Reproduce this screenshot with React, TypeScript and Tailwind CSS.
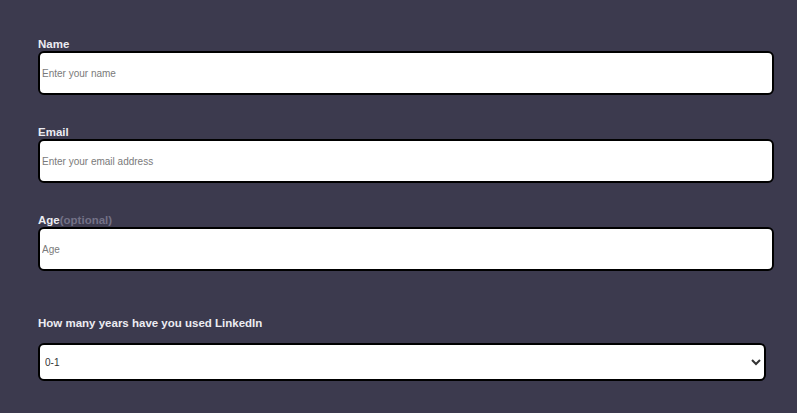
const field =
  "block h-[44px] w-[736px] rounded-[6px] border-2 border-black bg-white px-[2px] font-['Liberation_Sans',Arial,sans-serif] text-[10px] text-[#333] placeholder:text-[#7a7a7a] outline-none";

const label = "block text-[11.5px] font-bold leading-[14px] text-[#ececf2]";

export default function App() {
  return (
    <div className="min-h-[413px] w-full bg-[#3c3a4e] font-['Liberation_Sans',Arial,sans-serif]">
      <form className="pl-[38px] pr-[24px] pt-[37px]">
        {/* Name */}
        <label className={label}>Name</label>
        <input type="text" placeholder="Enter your name" className={field} />

        {/* Email */}
        <label className={`mt-[30px] ${label}`}>Email</label>
        <input type="email" placeholder="Enter your email address" className={field} />

        {/* Age */}
        <label className={`mt-[30px] ${label}`}>
          Age<span className="text-[#737186]">(optional)</span>
        </label>
        <input type="text" placeholder="Age" className={field} />

        {/* LinkedIn */}
        <label className={`mt-[45px] ${label}`}>How many years have you used LinkedIn</label>
        <select className="mt-[13px] block h-[38px] w-[728px] rounded-[6px] border-2 border-black bg-white px-[1px] font-['Liberation_Sans',Arial,sans-serif] text-[10px] text-[#333] outline-none">
          <option>0-1</option>
          <option>1-3</option>
          <option>3-5</option>
          <option>5+</option>
        </select>
      </form>
    </div>
  );
}
